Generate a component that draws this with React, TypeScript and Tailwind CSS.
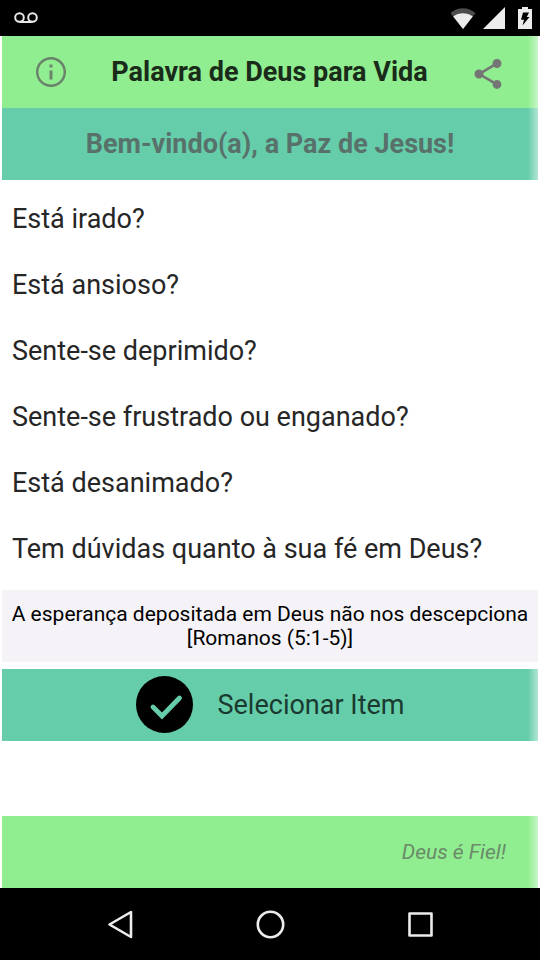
import React from 'react'

const QUESTIONS = [
  'Está irado?',
  'Está ansioso?',
  'Sente-se deprimido?',
  'Sente-se frustrado ou enganado?',
  'Está desanimado?',
  'Tem dúvidas quanto à sua fé em Deus?',
]

const StatusBar = () => (
  <div className="flex h-9 items-center justify-between bg-black pl-3.5 pr-2">
    <svg width="24" height="12" viewBox="0 0 24 12" fill="none" stroke="#e8e8e8" strokeWidth="2" aria-hidden="true">
      <circle cx="5.5" cy="5.5" r="4.3" />
      <circle cx="18.5" cy="5.5" r="4.3" />
      <path d="M5.5 10h13" />
    </svg>
    <div className="flex items-center gap-1.5">
      <svg width="26" height="22" viewBox="0 0 26 22" aria-hidden="true">
        <path d="M12 22 -0.500 6C3.500 2.800 7.500 1.200 12 1.200s8.500 1.600 12.500 4.800z" fill="#4c4c4c" />
        <path d="M12 22 2.200 9.500C5.300 7.200 8.500 6.200 12 6.200s6.700 1 9.800 3.300z" fill="#ececec" />
      </svg>
      <svg width="23" height="22" viewBox="0 0 23 22" aria-hidden="true">
        <path d="M0 22 22 0v22z" fill="#ececec" />
      </svg>
      <svg className="ml-1.5" width="14" height="22" viewBox="0 0 14 22" aria-hidden="true">
        <path d="M4 0h6v2h4v20H0V2h4z" fill="#ececec" />
        <path d="M5 5.500h6L8.800 10H11.500L4.500 18.500 6 12.800H3z" fill="#000" />
      </svg>
    </div>
  </div>
)

interface BandProps {
  className?: string;
  children: React.ReactNode;
}

// Coloured strip that fades out on its right edge
const Band = ({ className = '', children }: BandProps) => (
  <div className={`relative flex h-18 items-center ${className}`}>
    {children}
    <div className="pointer-events-none absolute inset-y-0 right-0 w-2.5 bg-linear-to-r from-white/0 to-white/50" />
  </div>
)

const Header = () => (
  <header>
    <Band className="justify-between bg-[#90ee90] pl-[31px] pr-8">
      <button type="button" aria-label="Informações" className="text-[#6a816a]">
        <svg width="36" height="36" viewBox="0 0 24 24" fill="currentColor">
          <path d="M11 17h2v-6h-2v6zm1-15C6.480 2 2 6.480 2 12s4.480 10 10 10 10-4.480 10-10S17.520 2 12 2zm0 18.400c-4.630 0-8.400-3.770-8.400-8.400S7.370 3.600 12 3.600s8.400 3.770 8.400 8.400-3.770 8.400-8.400 8.400zM11 9h2V7h-2v2z" />
        </svg>
      </button>
      <h1 className="text-[27px] leading-8 font-bold text-[#1a2b1a]">Palavra de Deus para Vida</h1>
      <button type="button" aria-label="Compartilhar" className="pt-1 text-[#757575]">
        <svg width="36" height="36" viewBox="0 0 24 24" fill="currentColor">
          <path d="M18 16.080c-.76 0-1.440.3-1.960.77L8.910 12.700c.05-.23.09-.46.09-.7s-.04-.47-.09-.7l7.050-4.110c.54.5 1.250.81 2.040.81 1.660 0 3-1.340 3-3s-1.340-3-3-3-3 1.340-3 3c0 .24.04.47.09.7L8.040 9.810C7.500 9.310 6.790 9 6 9c-1.660 0-3 1.340-3 3s1.340 3 3 3c.79 0 1.500-.31 2.040-.81l7.120 4.160c-.05.21-.08.43-.08.650 0 1.610 1.310 2.920 2.920 2.920 1.610 0 2.920-1.310 2.920-2.920s-1.310-2.920-2.920-2.920z" />
        </svg>
      </button>
    </Band>
    <Band className="justify-center bg-[#66cdaa]">
      <h2 className="text-[27px] leading-8 font-bold text-[#58716a]">Bem-vindo(a), a Paz de Jesus!</h2>
    </Band>
  </header>
)

const NavBar = () => (
  <nav className="flex h-18 items-center justify-center gap-[114px] bg-black" aria-label="Navegação">
    <button type="button" aria-label="Voltar">
      <svg width="36" height="36" viewBox="0 0 36 36" fill="none" stroke="#ececec" strokeWidth="2.600" strokeLinejoin="round">
        <path d="M7.500 18.500 29 6v25z" />
      </svg>
    </button>
    <button type="button" aria-label="Início">
      <svg width="36" height="36" viewBox="0 0 36 36" fill="none" stroke="#ececec" strokeWidth="2.600">
        <circle cx="18.500" cy="18.500" r="12.700" />
      </svg>
    </button>
    <button type="button" aria-label="Recentes">
      <svg width="36" height="36" viewBox="0 0 36 36" fill="none" stroke="#ececec" strokeWidth="2.600" strokeLinejoin="round">
        <rect x="7.500" y="7.500" width="22" height="22" />
      </svg>
    </button>
  </nav>
)

const App = () => {
  return (
    <div className="flex min-h-screen flex-col bg-white font-['Roboto',sans-serif]">
      <StatusBar />
      <main className="flex grow flex-col px-0.5">
        <Header />

        <ul className="pt-1.5 pb-2">
          {QUESTIONS.map((question) => (
            <li key={question}>
              <button type="button" className="flex h-[66px] w-full items-center px-2.5 text-left text-[27px] leading-8 text-[#262626]">
                {question}
              </button>
            </li>
          ))}
        </ul>

        <p className="flex h-18 items-center justify-center bg-[#f5f3f7] text-center text-[21px] leading-6 text-black">
          <span>
            A esperança depositada em Deus não nos descepciona
            <br />
            [Romanos (5:1-5)]
          </span>
        </p>

        <div className="pt-[7px]">
          <Band className="justify-center bg-[#66cdaa]">
            <button type="button" className="flex items-center gap-6 text-[27px] leading-8 text-[#1a3a30]">
              <svg width="58" height="58" viewBox="0 0 58 58" fill="none" aria-hidden="true">
                <circle cx="28.500" cy="28.500" r="28.500" fill="#000" />
                <path d="M17 31 26 40 43.500 22" stroke="#66cdaa" strokeWidth="4.800" strokeLinecap="round" strokeLinejoin="miter" />
              </svg>
              Selecionar Item
            </button>
          </Band>
        </div>

        <footer className="mt-auto">
          <Band className="justify-end bg-[#90ee90] pr-8">
            <p className="text-[21px] leading-6 italic text-[#6a8a6a]">Deus é Fiel!</p>
          </Band>
        </footer>
      </main>
      <NavBar />
    </div>
  )
}

export default App
